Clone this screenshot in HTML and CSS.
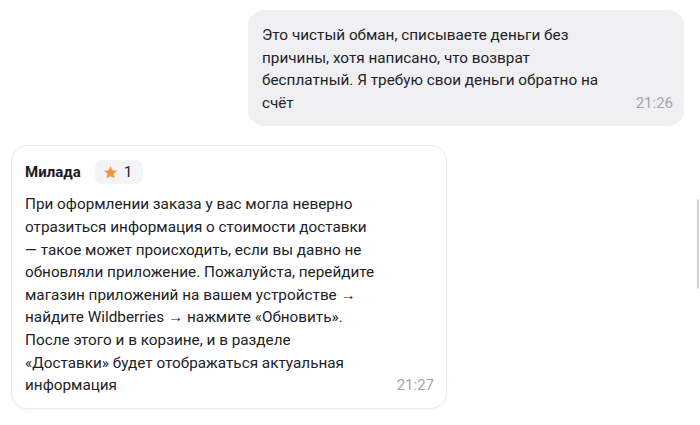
FILE: index.html
```html
<!DOCTYPE html>
<html lang="ru">
<head>
<meta charset="utf-8">
<link rel="stylesheet" href="styles.css">
</head>
<body>
<div class="chat">
  <div class="msg msg-out">
    <div class="msg-body">
      <p class="msg-text">Это чистый обман, списываете деньги без причины, хотя написано, что возврат бесплатный. Я требую свои деньги обратно на счёт</p>
      <span class="msg-time">21:26</span>
    </div>
  </div>
  <div class="msg msg-in">
    <div class="msg-head">
      <span class="author">Милада</span>
      <span class="rating">
        <svg class="star" viewBox="0 0 24 24" width="15" height="15"><path d="M12 1.8l3.1 6.5 7.1.9-5.2 4.9 1.3 7.1L12 17.8l-6.3 3.4 1.3-7.1L1.8 9.2l7.1-.9z" fill="#ff9233"/></svg>
        <span class="rating-num">1</span>
      </span>
    </div>
    <div class="msg-body">
      <p class="msg-text">При оформлении заказа у вас могла неверно отразиться информация о стоимости доставки — такое может происходить, если вы давно не обновляли приложение. Пожалуйста, перейдите магазин приложений на вашем устройстве → найдите Wildberries → нажмите «Обновить». После этого и в корзине, и в разделе «Доставки» будет отображаться актуальная информация</p>
      <span class="msg-time">21:27</span>
    </div>
  </div>
</div>
<div class="scrollbar"></div>
</body>
</html>
```

FILE: styles.css
```css
html, body {
  margin: 0;
  padding: 0;
  background: #ffffff;
}
body {
  font-family: Roboto, "Noto Sans", "Liberation Sans", sans-serif;
  color: #222226;
  font-size: 15.3px;
  line-height: 22.6px;
  width: 700px;
  height: 425px;
  overflow: hidden;
  position: relative;
}
.chat {
  display: flex;
  flex-direction: column;
  padding: 10px 16px 0 11px;
  gap: 19px;
}
.msg {
  width: 436px;
  box-sizing: border-box;
  border-radius: 16px;
}
.msg-out {
  align-self: flex-end;
  background: #f0f0f3;
  padding: 14px 11px 12px 14px;
}
.msg-in {
  align-self: flex-start;
  background: #ffffff;
  border: 1px solid #ececef;
  box-shadow: 0 1px 3px rgba(0,0,0,0.04);
  padding: 14px 12px 11px 13px;
}
.msg-head {
  display: flex;
  align-items: center;
  gap: 14px;
  margin-bottom: 9px;
}
.author {
  font-weight: 700;
  font-size: 15px;
  color: #1c1c20;
}
.rating {
  display: flex;
  align-items: center;
  gap: 6px;
  height: 24px;
  padding: 0 11px 0 8px;
  background: #f4f4f7;
  border-radius: 8px;
  font-size: 15.5px;
  color: #2a2a2e;
}
.star {
  display: block;
}
.msg-body {
  display: flex;
  align-items: flex-end;
  gap: 20px;
}
.msg-text {
  margin: 0;
  flex: 1;
}
.msg-time {
  font-size: 15px;
  color: #a4a4ab;
  line-height: 22.6px;
  white-space: nowrap;
}
.scrollbar {
  position: absolute;
  right: 1px;
  top: 199px;
  width: 2px;
  height: 90px;
  background: #d3d3dd;
  border-radius: 1px;
}
```
